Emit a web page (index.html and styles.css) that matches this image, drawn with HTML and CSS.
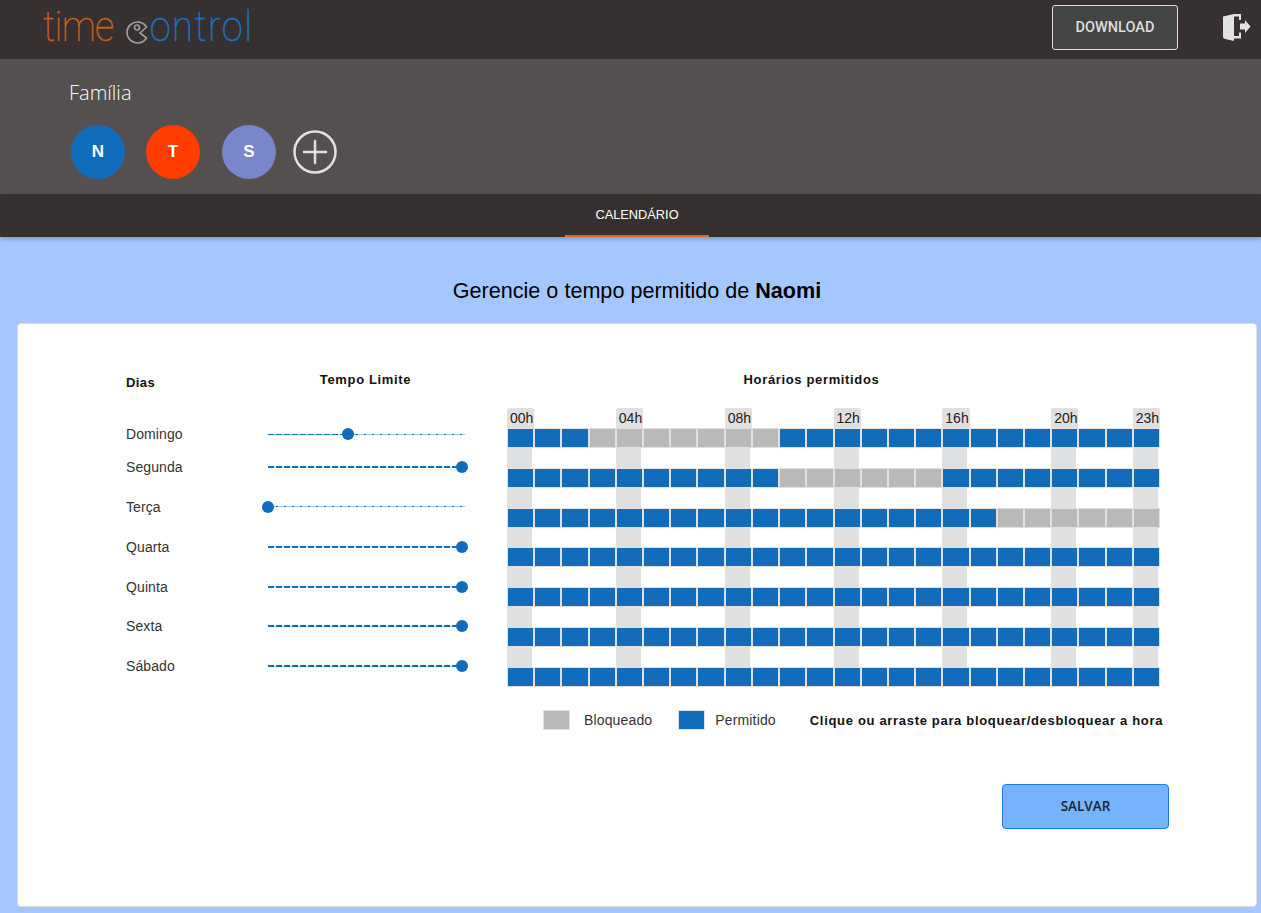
FILE: index.html
```html
<!DOCTYPE html>
<html lang="pt-BR">
<head>
  <meta charset="UTF-8">
  <meta name="viewport" content="width=device-width, initial-scale=1.0">
  <title>Time Control</title>
  <link rel="stylesheet" href="styles.css">
</head>
<body>
  <header class="topbar">
    <div class="logo">
      <span class="logo-time">time</span>
      <svg class="logo-pac" width="23" height="23" viewBox="0 0 23 23" fill="none" stroke="#a09c99" stroke-width="1.7">
        <path d="M20.500 6A10.500 10.500 0 1 0 20.500 17L14 12Z" stroke-linejoin="round"/>
        <circle cx="11" cy="6.500" r="2.500"/>
      </svg>
      <span class="logo-control">ontrol</span>
    </div>
    <a class="download" href="#">DOWNLOAD</a>
    <svg class="exit" width="28" height="28" viewBox="0 0 28 28" fill="#e2e2e2">
      <path d="M0 2.500 11 0V27L2 25 0 23.500Z"/>
      <path d="M11 0H18V6H16V2.500H11ZM11 22H16V18.500H18V24.500H11Z"/>
      <path d="M17 9.500H22V6L27.500 12.500 22 19V15.500H17Z"/>
    </svg>
  </header>

  <section class="family">
    <h2 class="family-title">Família</h2>
    <div class="members">
      <span class="avatar avatar-n">N</span>
      <span class="avatar avatar-t">T</span>
      <span class="avatar avatar-s">S</span>
      <svg class="add" width="44" height="44" viewBox="0 0 44 44" fill="none" stroke="#e0e0e0" stroke-linecap="round">
        <circle cx="22" cy="22" r="20.500" stroke-width="2.500"/>
        <path d="M22 11V33M11 22H33" stroke-width="2.500"/>
      </svg>
    </div>
  </section>

  <nav class="tabs">
    <a class="tab" href="#">CALENDÁRIO</a>
  </nav>

  <h1 class="title">Gerencie o tempo permitido de <b>Naomi</b></h1>

  <main class="card">
    <div class="schedule">
      <div class="limits">
        <div class="limits-head">
          <span class="head-days">Dias</span>
          <span class="head-limit">Tempo Limite</span>
        </div>
        <div class="limits-rows" id="limit-rows"></div>
      </div>

      <div class="hours">
        <div class="head-hours">Horários permitidos</div>
        <div class="hour-grid" id="hour-grid"></div>
        <div class="legend">
          <span class="swatch swatch-blocked"></span>
          <span class="legend-label">Bloqueado</span>
          <span class="swatch swatch-allowed"></span>
          <span class="legend-label">Permitido</span>
          <span class="legend-hint">Clique ou arraste para bloquear/desbloquear a hora</span>
        </div>
      </div>
    </div>

    <div class="actions">
      <button class="save" type="button">SALVAR</button>
    </div>
  </main>

  <script src="script.js"></script>
</body>
</html>
```

FILE: styles.css
```css
* {
  box-sizing: border-box;
}
body {
  font-family: "Liberation Sans", Arial, sans-serif;
  background-color: #a5c7ff;
  margin: 0;
  height: 913px;
  overflow: hidden;
  color: #222;
}

.topbar {
  display: flex;
  align-items: center;
  height: 59px;
  background-color: #363130;
  padding: 0 10px 0 43px;
}
.logo {
  display: flex;
  align-items: flex-end;
  height: 45px;
  margin-top: -3px;
  margin-right: auto;
  font-family: Roboto, sans-serif;
  font-weight: 100;
  font-size: 38px;
  line-height: 45px;
  -webkit-text-stroke: 0.4px;
}
.logo-time,
.logo-control {
  transform: scaleY(1.14);
  transform-origin: 0 35.500px;
}
.logo-time {
  color: #c8601c;
  letter-spacing: -0.6px;
}
.logo-control {
  color: #1a74c8;
  letter-spacing: 1.5px;
}
.logo-pac {
  margin: 0 1px 7px 12px;
}
.download {
  display: flex;
  align-items: center;
  justify-content: center;
  width: 126px;
  height: 45px;
  margin: -4px 45px 0 0;
  border: 1px solid #ddd;
  border-radius: 3px;
  background-color: #444;
  color: #ddd;
  font-family: Roboto, sans-serif;
  font-weight: 500;
  font-size: 14.500px;
  text-decoration: none;
}
.exit {
  margin-top: -3px;
}

.family {
  height: 135px;
  background-color: #545050;
  padding: 21px 0 0 69px;
}
.family-title {
  margin: 0;
  font-family: "Open Sans", sans-serif;
  font-weight: 300;
  font-size: 20px;
  line-height: 26px;
  color: #fff;
}
.members {
  display: flex;
  align-items: center;
  margin: 19px 0 0 2px;
}
.avatar {
  display: flex;
  align-items: center;
  justify-content: center;
  width: 54px;
  height: 54px;
  margin-right: 21px;
  border-radius: 50%;
  color: #fff;
  font-weight: bold;
  font-size: 17px;
}
.avatar-n {
  background-color: #116cbc;
}
.avatar-t {
  background-color: #ff3d00;
  margin-right: 22px;
}
.avatar-s {
  background-color: #7986cb;
  margin-right: 17px;
}

.tabs {
  display: flex;
  justify-content: center;
  height: 43px;
  background-color: #363130;
  box-shadow: 0 2px 5px rgba(0, 0, 0, 0.25);
  padding-left: 13px;
  position: relative;
}
.tab {
  display: flex;
  align-items: center;
  justify-content: center;
  width: 144px;
  border-bottom: 2px solid #e0662a;
  color: #fff;
  font-size: 12.800px;
  text-decoration: none;
}

.title {
  margin: 40px 0 0 0;
  height: 46px;
  padding-left: 13px;
  text-align: center;
  font-weight: normal;
  font-size: 21.600px;
  line-height: 28px;
  color: #000;
}

.card {
  height: 584px;
  margin: 0 4px 0 17px;
  background-color: #fff;
  border: 1px solid #ddd;
  border-radius: 4px;
  padding: 47px 96px 0 108px;
}
.schedule {
  display: flex;
}
.limits {
  width: 340px;
  margin-right: 41px;
}
.limits-head {
  display: flex;
  height: 50px;
  font-weight: bold;
  font-size: 13px;
  letter-spacing: 0.65px;
  color: #111;
}
.head-days {
  width: 142px;
  padding-top: 4px;
  letter-spacing: 0.4px;
}
.head-limit {
  width: 197px;
  padding: 1px 2px 0 0;
  text-align: center;
}
.limit-row {
  display: flex;
  align-items: center;
  height: 39.830px;
  font-size: 14px;
  letter-spacing: 0.1px;
  color: #333;
}
.limit-row:first-child {
  height: 26.200px;
}
.limit-day {
  width: 142px;
}
.slider {
  position: relative;
  width: 197px;
  height: 2px;
  background: repeating-linear-gradient(90deg, #116cbc 0 2px, #a4c8ea 2px 8px) center / 100% 1px no-repeat;
}
.slider-fill {
  height: 1px;
  margin-top: 0.500px;
  background: repeating-linear-gradient(90deg, #116cbc 0 6px, transparent 6px 8px);
}
.slider-full .slider-fill {
  height: 2px;
  margin-top: 0;
}
.slider-thumb {
  position: absolute;
  top: -5px;
  width: 12px;
  height: 12px;
  margin-left: -6.500px;
  border-radius: 50%;
  background-color: #116cbc;
}

.hours {
  width: 653px;
}
.head-hours {
  height: 37px;
  padding: 1px 44px 0 0;
  text-align: center;
  font-weight: bold;
  font-size: 13px;
  letter-spacing: 0.65px;
  color: #111;
}
.hour-grid {
  display: grid;
  grid-template-columns: repeat(24, 1fr);
  grid-template-rows: 20px repeat(6, 20px 19.830px) 20px;
  height: 279px;
}
.hour-label {
  border-radius: 2px 2px 0 0;
  font-size: 14px;
  line-height: 20px;
  padding-left: 3px;
  white-space: nowrap;
  color: #222;
}
.hour-label-on {
  background-color: #e0e0e0;
}
.cell {
  border: 1px solid #e0e0e0;
  background-color: #116cbc;
}
.cell-blocked {
  background-color: #b9b9b9;
}
.gap-on {
  width: 25px;
  background-color: #e0e0e0;
}

.legend {
  display: flex;
  align-items: center;
  height: 20px;
  margin-top: 23px;
  padding-left: 36px;
  font-size: 14px;
  letter-spacing: 0.15px;
  color: #333;
}
.swatch {
  flex: none;
  width: 27px;
  height: 20px;
  border: 1px solid #e0e0e0;
}
.swatch-blocked {
  background-color: #b9b9b9;
}
.swatch-allowed {
  background-color: #116cbc;
}
.legend-label {
  flex: none;
  margin-left: 14px;
  margin-right: 26px;
}
.swatch-allowed + .legend-label {
  margin-left: 10px;
  margin-right: 34px;
}
.legend-hint {
  flex: none;
  font-weight: bold;
  font-size: 13px;
  letter-spacing: 0.68px;
  color: #111;
  white-space: nowrap;
}

.actions {
  display: flex;
  justify-content: flex-end;
  margin-top: 54px;
}
.save {
  width: 167px;
  height: 45px;
  margin-right: -9px;
  padding-bottom: 3px;
  border: 1px solid #1a7be0;
  border-radius: 4px;
  background-color: #75b2ff;
  color: #1c2430;
  font-family: "Open Sans", sans-serif;
  font-weight: 600;
  font-size: 13.500px;
}
```

FILE: script.js
```js
const days = [
  { name: 'Domingo', limit: 40.8, blocked: [3, 9] },
  { name: 'Segunda', limit: 98.7, blocked: [10, 15] },
  { name: 'Terça', limit: 0, blocked: [18, 23] },
  { name: 'Quarta', limit: 98.7 },
  { name: 'Quinta', limit: 98.7 },
  { name: 'Sexta', limit: 98.7 },
  { name: 'Sábado', limit: 98.7 }
];
const labels = { 0: '00h', 4: '04h', 8: '08h', 12: '12h', 16: '16h', 20: '20h', 23: '23h' };

const limitRows = document.getElementById('limit-rows');
const hourGrid = document.getElementById('hour-grid');

days.forEach(day => {
  const row = document.createElement('div');
  row.className = 'limit-row';
  row.innerHTML = `
    <span class="limit-day">${day.name}</span>
    <div class="slider ${day.limit > 90 ? 'slider-full' : ''}">
      <div class="slider-fill" style="width: ${day.limit}%"></div>
      <div class="slider-thumb" style="left: ${day.limit}%"></div>
    </div>
  `;
  limitRows.appendChild(row);
});

function addCell(className, text) {
  const cell = document.createElement('div');
  cell.className = className;
  if (text) cell.textContent = text;
  hourGrid.appendChild(cell);
}

for (let h = 0; h < 24; h++) {
  addCell(labels[h] ? 'hour-label hour-label-on' : 'hour-label', labels[h]);
}

days.forEach((day, index) => {
  for (let h = 0; h < 24; h++) {
    const blocked = day.blocked && h >= day.blocked[0] && h <= day.blocked[1];
    addCell(blocked ? 'cell cell-blocked' : 'cell');
  }
  if (index < days.length - 1) {
    for (let h = 0; h < 24; h++) {
      addCell(labels[h] ? 'gap-on' : 'gap');
    }
  }
});
```
